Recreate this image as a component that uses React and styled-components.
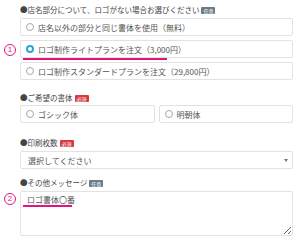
import styled, { createGlobalStyle } from "styled-components"

const GlobalStyle = createGlobalStyle`
  html, body {
    margin: 0;
    padding: 0;
    background: #fff;
  }
  body {
    font-family: "Noto Sans CJK JP", "Noto Sans", sans-serif;
    color: #333;
  }
`

const PINK = "#e4147f"

const Form = styled.div`
  width: 300px;
  height: 240px;
  box-sizing: border-box;
  padding: 4px 7px 0 20px;
  position: relative;
  overflow: hidden;
`

const Section = styled.div`
  margin-top: ${p => p.$top || 0}px;
  display: flex;
  flex-direction: column;
`

const Label = styled.div`
  display: flex;
  align-items: center;
  gap: 2px;
  font-size: 7.5px;
  line-height: 12px;
  height: 12px;
  color: #444;
  white-space: nowrap;
  margin-bottom: ${p => p.$gap || 2}px;
`

const Badge = styled.span`
  display: inline-block;
  font-size: 5px;
  line-height: 7px;
  padding: 0 2px;
  border-radius: 1px;
  color: #fff;
  background: ${p => (p.$required ? "#d6393f" : "#6d7b88")};
`

const Options = styled.div`
  display: flex;
  flex-direction: column;
  gap: 4px;
`

const Row = styled.div`
  display: grid;
  grid-template-columns: 1fr 1fr;
  gap: 4px;
`

const Option = styled.div`
  position: relative;
  height: 18px;
  box-sizing: border-box;
  border: 1px solid #e2e2e2;
  border-radius: 2px;
  display: flex;
  align-items: center;
  gap: 4px;
  padding-left: 5px;
  font-size: 8px;
  color: #555;
  white-space: nowrap;
`

const Radio = styled.span`
  width: 8px;
  height: 8px;
  box-sizing: border-box;
  border-radius: 50%;
  border: ${p => (p.$checked ? "2px solid #2ea3dc" : "1px solid #a8a8a8")};
  background: #fff;
  flex: none;
`

const Select = styled.div`
  height: 18px;
  box-sizing: border-box;
  border: 1px solid #e2e2e2;
  border-radius: 2px;
  display: flex;
  align-items: center;
  justify-content: space-between;
  padding: 0 4px 0 7px;
  font-size: 8px;
  color: #555;
`

const Caret = styled.span`
  width: 0;
  height: 0;
  border-left: 2.5px solid transparent;
  border-right: 2.5px solid transparent;
  border-top: 3px solid #777;
`

const TextBox = styled.div`
  position: relative;
`

const TextArea = styled.textarea`
  display: block;
  width: 100%;
  height: 45px;
  box-sizing: border-box;
  border: 1px solid #e2e2e2;
  border-radius: 2px;
  padding: 3px 6px;
  margin: 0;
  font-family: "Noto Sans CJK JP", "Noto Sans", sans-serif;
  font-size: 8px;
  line-height: 10px;
  color: #555;
  outline: none;
`

const Mark = styled.span`
  position: absolute;
  left: ${p => p.$x}px;
  top: ${p => p.$y}px;
  width: 12px;
  height: 12px;
  box-sizing: border-box;
  border: 1px solid ${PINK};
  border-radius: 50%;
  color: ${PINK};
  font-family: "Liberation Sans", sans-serif;
  font-size: 8px;
  line-height: 10px;
  text-align: center;
`

const Underline = styled.span`
  position: absolute;
  left: ${p => p.$x}px;
  top: ${p => p.$y}px;
  width: ${p => p.$w}px;
  height: 2px;
  background: ${PINK};
`

export default function App() {
  return (
    <>
      <GlobalStyle />
      <Form>
        <Section>
          <Label>
            ●店名部分について、ロゴがない場合お選びください<Badge>任意</Badge>
          </Label>
          <Options>
            <Option>
              <Radio />店名以外の部分と同じ書体を使用（無料）
            </Option>
            <Option>
              <Radio $checked />ロゴ制作ライトプランを注文（3,000円）
              <Underline $x={2} $y={17} $w={144} />
            </Option>
            <Option>
              <Radio />ロゴ制作スタンダードプランを注文（29,800円）
            </Option>
          </Options>
        </Section>

        <Section $top={12}>
          <Label $gap={1}>
            ●ご希望の書体<Badge $required>必須</Badge>
          </Label>
          <Row>
            <Option>
              <Radio />ゴシック体
            </Option>
            <Option>
              <Radio />明朝体
            </Option>
          </Row>
        </Section>

        <Section $top={14}>
          <Label>
            ●印刷枚数<Badge $required>必須</Badge>
          </Label>
          <Select>
            選択してください<Caret />
          </Select>
        </Section>

        <Section $top={8}>
          <Label>
            ●その他メッセージ<Badge>任意</Badge>
          </Label>
          <TextBox>
            <TextArea defaultValue="ロゴ書体〇番" />
            <Underline $x={3} $y={14} $w={49} />
          </TextBox>
        </Section>

        <Mark $x={4} $y={44}>1</Mark>
        <Mark $x={4} $y={193}>2</Mark>
      </Form>
    </>
  )
}
